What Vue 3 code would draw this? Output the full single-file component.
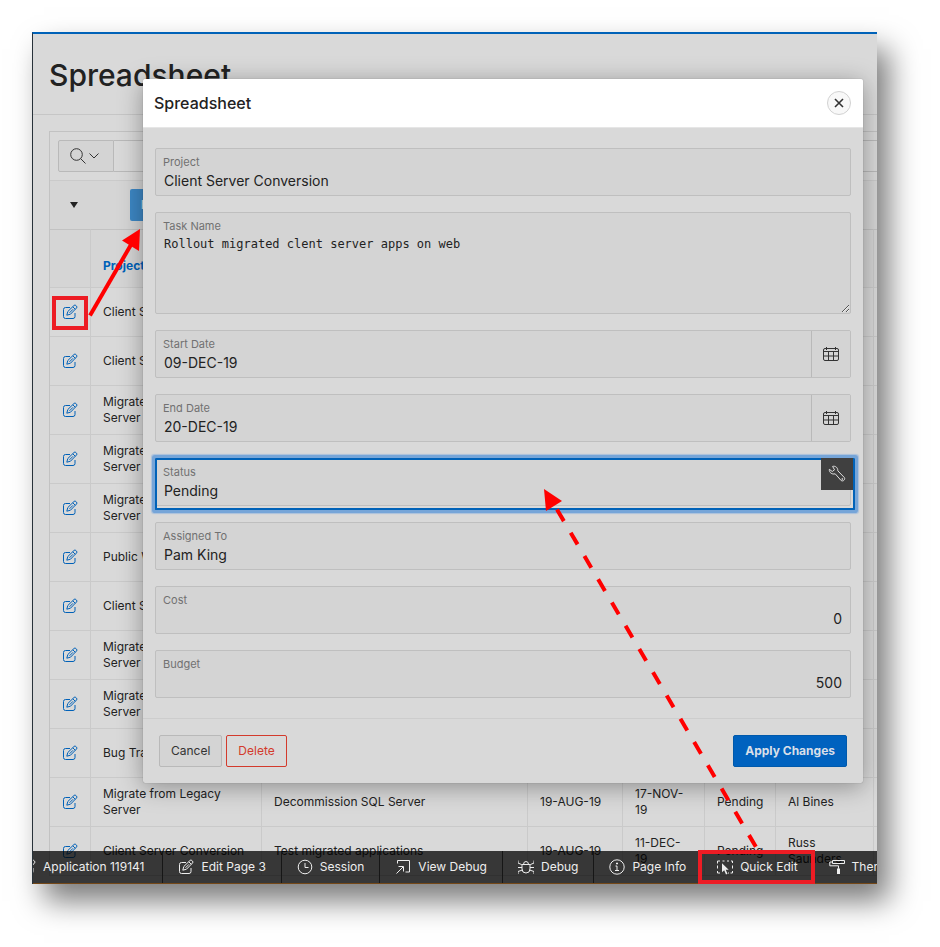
<script setup>
import { ref } from 'vue'

const migrate = 'Migrate from Legacy Server'
const client = 'Client Server Conversion'

const rows = [
  { project: client },
  { project: client },
  { project: migrate },
  { project: migrate },
  { project: migrate },
  { project: 'Public Website' },
  { project: client },
  { project: migrate },
  { project: migrate },
  { project: 'Bug Tracker' },
  { project: migrate, task: 'Decommission SQL Server', start: '19-AUG-19', end: '17-NOV-19', status: 'Pending', owner: 'Al Bines' },
  { project: client, task: 'Test migrated applications', start: '19-AUG-19', end: '11-DEC-19', status: 'Pending', owner: 'Russ Saunders' }
]

const fields = ref([
  { id: 'project', label: 'Project', value: 'Client Server Conversion' },
  { id: 'task', label: 'Task Name', value: 'Rollout migrated clent server apps on web', kind: 'area' },
  { id: 'start', label: 'Start Date', value: '09-DEC-19', kind: 'date' },
  { id: 'end', label: 'End Date', value: '20-DEC-19', kind: 'date' },
  { id: 'status', label: 'Status', value: 'Pending', kind: 'picked' },
  { id: 'assigned', label: 'Assigned To', value: 'Pam King' },
  { id: 'cost', label: 'Cost', value: '0', kind: 'number' },
  { id: 'budget', label: 'Budget', value: '500', kind: 'number' }
])

const editPaths = [
  'M8 3.500H3.500a2 2 0 0 0-2 2v7a2 2 0 0 0 2 2h7.500a2 2 0 0 0 2-2V9',
  'M4.800 11.200l1-3.700L12 1.500a1.300 1.300 0 0 1 1.900 0l.6.6a1.300 1.300 0 0 1 0 1.900L8.500 10.200z',
  'M10.800 2.800l2.500 2.500M7.500 8.800l3.500-3.500'
]

const tools = [
  { label: 'Application 119141', paths: editPaths },
  { label: 'Edit Page 3', paths: editPaths },
  { label: 'Session', paths: ['M8 1.2a6.8 6.8 0 1 0 0 13.6a6.8 6.8 0 0 0 0-13.6z', 'M8 4v4.5h3.5'] },
  { label: 'View Debug', paths: ['M2.5 4.5v-3h12v11.500h-4', 'M1.500 14.500L8 8M3.500 7.500H8.500V12.500'] },
  { label: 'Debug', paths: ['M4 5.500h8v4.500a4 4 0 0 1-8 0z', 'M5.500 5.500a2.500 3 0 0 1 5 0', 'M0 1.500v2.500l3.500 1.500h1M16 1.500v2.500l-3.500 1.500h-1M0 8.500h4M16 8.500h-4M0 15v-2.500l4.500-1.500M16 15v-2.500l-4.500-1.500'] },
  { label: 'Page Info', paths: ['M8 .8a7.200 7.200 0 1 0 0 14.400a7.200 7.200 0 0 0 0-14.400z', 'M6.500 7H8v4.500M6 11.500h4M7.500 4h1v1h-1z'] },
  { label: 'Quick Edit', paths: ['M.5 4.500v-2.500h2.500M5.500 2h2M10 2h2M14 2h1.500v2M15.500 6.500v3M15.500 12v2h-2M.5 6.500v3M.5 12v2h2.500M12 14h-1'], solid: 'M5 4.200v9l2.200-2 1.800 4.300 1.500-.7-1.800-4.100h3z' },
  { label: 'Theme Roller', paths: ['M3.500 1.500h12v3h-12z', 'M3.500 3H.8v3.800h8.700v3'], solid: 'M8 9.500h3v5.500h-3z' }
]
</script>

<template>
  <main class="stage">
    <div class="frame">
      <header class="page-head"><h1>Spreadsheet</h1></header>

      <section class="region">
        <div class="search">
          <button class="search-btn" type="button" aria-label="Search columns">
            <svg width="30" height="16" viewBox="0 0 30 16">
              <circle cx="6.500" cy="6.500" r="5.800" />
              <path d="M10.700 10.700L15.500 15.500M19.500 5.500l4.500 4.500 4.500-4.500" />
            </svg>
          </button>
          <input class="search-box" type="text" aria-label="Search">
        </div>
        <div class="actions">
          <button class="caret" type="button" aria-label="Row actions"></button>
          <button class="edit-btn" type="button">Edit</button>
        </div>
        <table class="grid">
          <colgroup>
            <col class="c-edit"><col class="c-project"><col class="c-task"><col class="c-start">
            <col class="c-end"><col class="c-status"><col class="c-owner"><col class="c-rest">
          </colgroup>
          <thead>
            <tr><th></th><th>Project</th><th></th><th></th><th></th><th></th><th></th><th></th></tr>
          </thead>
          <tbody>
            <tr v-for="(r, i) in rows" :key="i">
              <td class="edit-cell">
                <a href="#" aria-label="Edit row">
                  <svg class="icon" viewBox="0 0 16 16"><path v-for="p in editPaths" :key="p" :d="p" /></svg>
                </a>
              </td>
              <td>{{ r.project }}</td>
              <td>{{ r.task }}</td>
              <td>{{ r.start }}</td>
              <td>{{ r.end }}</td>
              <td>{{ r.status }}</td>
              <td>{{ r.owner }}</td>
              <td></td>
            </tr>
          </tbody>
        </table>
      </section>

      <section class="dialog" role="dialog" aria-labelledby="dialog-title">
        <header class="dialog-head">
          <h2 id="dialog-title">Spreadsheet</h2>
          <button class="close" type="button" aria-label="Close">
            <svg width="10" height="10" viewBox="0 0 10 10"><path d="M1 1l8 8M9 1l-8 8" /></svg>
          </button>
        </header>
        <form class="dialog-body" @submit.prevent>
          <div v-for="f in fields" :key="f.id" class="field" :class="f.kind">
            <div class="control">
              <label :for="f.id">{{ f.label }}</label>
              <textarea v-if="f.kind === 'area'" :id="f.id" v-model="f.value" spellcheck="false"></textarea>
              <input v-else :id="f.id" v-model="f.value" type="text">
            </div>
            <button v-if="f.kind === 'date'" class="calendar" type="button" :aria-label="'Pick ' + f.label">
              <svg width="16" height="14" viewBox="0 0 16 14">
                <rect x=".5" y="1.500" width="15" height="12" rx="1.500" />
                <path d="M.5 4.500h15M.5 9h15M5.500 4.500v9M10.500 4.500v9M3.500 0v3M12.500 0v3" />
              </svg>
            </button>
            <div v-if="f.kind === 'picked'" class="selection">
              <button class="wrench" type="button" aria-label="Edit component">
                <svg width="18" height="18" viewBox="0 0 18 18">
                  <path d="M1.300 4.300L4.300 6.500 6.500 4.800 4.600 1.400C7.500.6 10 2.800 9.800 5.800L16.300 12.500C17.600 14 15.500 16.900 13.200 15.600L7.200 8.800C4 9.800 1 7.500 1.300 4.300z" />
                  <circle cx="14.300" cy="14" r=".5" />
                </svg>
              </button>
            </div>
          </div>
        </form>
        <footer class="dialog-foot">
          <button class="btn" type="button">Cancel</button>
          <button class="btn danger" type="button">Delete</button>
          <button class="btn hot" type="button">Apply Changes</button>
        </footer>
      </section>

      <nav class="devbar" aria-label="Developer toolbar">
        <a v-for="t in tools" :key="t.label" href="#">
          <svg class="icon" viewBox="0 0 16 16">
            <path v-for="p in t.paths" :key="p" :d="p" />
            <path v-if="t.solid" class="solid" :d="t.solid" />
          </svg>
          <span>{{ t.label }}</span>
        </a>
      </nav>
    </div>

    <svg class="marks" width="940" height="947" viewBox="0 0 940 947" aria-hidden="true">
      <rect x="54" y="298" width="32" height="30" />
      <rect x="700" y="852" width="113" height="30" />
      <path class="line" d="M90 315.500L132 243" />
      <path class="head" d="M140 229L139 251 122 240.500z" />
      <path class="line dashed" d="M557 509.500L756 847" />
      <path class="head" d="M544 489L562 501 546 511z" />
    </svg>
  </main>
</template>

<style>
body {
  margin: 0;
  background: #fff;
}
</style>

<style scoped>
.stage {
  position: relative;
  box-sizing: border-box;
  min-height: 100vh;
  padding: 32px 63px 63px 32px;
  overflow: hidden;
  font-family: Inter, "Liberation Sans", sans-serif;
  font-size: 12px;
  line-height: 16px;
  color: #222;
}
.stage *,
.stage *::before {
  box-sizing: border-box;
}
button,
input,
textarea {
  margin: 0;
  font: inherit;
  color: inherit;
}
svg {
  display: block;
  fill: none;
  stroke: currentColor;
}
.frame {
  position: relative;
  overflow: hidden;
  background: #d9d9d9;
  border-top: 2px solid #0062b8;
  border-left: 1px solid #28323a;
  box-shadow: 12px 17px 28px rgba(0, 0, 0, 0.52);
}
.page-head {
  height: 81px;
  padding: 21px 16px 0;
  border-bottom: 1px solid #c6c6c6;
}
h1 {
  margin: 0;
  font-size: 30px;
  line-height: 40px;
  font-weight: 500;
  color: #222;
}
.region {
  margin: 16px -24px 8px 16px;
  border: 1px solid #c2c2c2;
}
.search {
  display: flex;
  height: 49px;
  padding: 8px;
  border-bottom: 1px solid #cacaca;
}
.search-btn {
  width: 56px;
  height: 32px;
  padding: 0 0 0 11px;
  border: 1px solid #b9b9b9;
  border-radius: 2px 0 0 2px;
  background: #d4d4d4;
  color: #333;
}
.search-box {
  flex: 1;
  height: 32px;
  border: 1px solid #b9b9b9;
  border-left: 0;
  background: #d9d9d9;
}
.actions {
  display: flex;
  align-items: center;
  gap: 48px;
  height: 48px;
  padding-left: 16px;
  background: #d5d5d5;
}
.caret {
  display: grid;
  place-items: center;
  width: 16px;
  height: 32px;
  padding: 0;
  border: 0;
  background: none;
}
.caret::before {
  content: "";
  border: 4px solid transparent;
  border-top: 6px solid #222;
  border-bottom: 0;
}
.edit-btn {
  height: 32px;
  padding: 0 11px;
  border: 0;
  border-radius: 2px;
  background: #3d87c4;
  font-weight: 700;
  color: #d9e2ea;
}
.grid {
  width: 100%;
  table-layout: fixed;
  border-collapse: separate;
  border-spacing: 0;
}
.c-edit { width: 41px; }
.c-project { width: 171px; }
.c-task { width: 266px; }
.c-start { width: 95px; }
.c-end { width: 82px; }
.c-status { width: 71px; }
.c-owner { width: 98px; }
th,
td {
  padding: 0 12px;
  border: solid #cacaca;
  border-width: 1px 1px 0 0;
  text-align: left;
}
th {
  height: 58px;
  padding-top: 15px;
  border-top-color: #c2c2c2;
  background: #d5d5d5;
  font-weight: 700;
  color: #0061b8;
}
td {
  height: 49px;
}
.edit-cell a {
  color: #0061b8;
}
.icon {
  flex: none;
  width: 16px;
  height: 16px;
}
.solid {
  fill: currentColor;
  stroke: none;
}
.dialog {
  position: absolute;
  top: 45px;
  left: 110px;
  right: 14px;
  border-radius: 2px;
  background: #d9d9d9;
  box-shadow: 0 0 1px rgba(0, 0, 0, 0.4), 0 4px 24px rgba(0, 0, 0, 0.35);
}
.dialog-head {
  display: flex;
  align-items: center;
  justify-content: space-between;
  height: 49px;
  padding: 0 12px 0 11px;
  border-bottom: 1px solid #e6e6e6;
  border-radius: 2px 2px 0 0;
  background: #fff;
}
h2 {
  margin: 0;
  font-size: 16px;
  line-height: 24px;
  font-weight: 500;
}
.close {
  display: grid;
  place-items: center;
  width: 24px;
  height: 24px;
  padding: 0;
  border: 1px solid #d2d2d2;
  border-radius: 50%;
  background: #f8f8f8;
}
.close svg {
  stroke-width: 1.6;
  color: #333;
}
.dialog-body {
  display: flex;
  flex-direction: column;
  gap: 16px;
  padding: 20px 12px;
}
.field {
  position: relative;
  display: flex;
  height: 48px;
  border: 1px solid #bfbfbf;
  border-radius: 2px;
  background: #d4d4d4;
}
.field.area {
  height: 102px;
}
.control {
  flex: 1;
  display: flex;
  flex-direction: column;
}
label {
  height: 20px;
  padding: 5px 7px 0;
  font-size: 11px;
  line-height: 16px;
  color: #717171;
}
.search-box,
.control input {
  outline: 0;
}
.control input,
textarea {
  display: block;
  width: 100%;
  padding: 0 8px;
  border: 0;
  outline: 0;
  background: none;
}
.control input {
  height: 22px;
  font-size: 14px;
}
.number input {
  text-align: right;
}
textarea {
  flex: 1;
  padding-top: 3px;
  font-family: "DejaVu Sans Mono", monospace;
  font-size: 12px;
  line-height: 16px;
}
.calendar {
  display: grid;
  place-items: center;
  width: 39px;
  padding: 0;
  border: 0;
  border-left: 1px solid #b9b9b9;
  background: #d4d4d4;
  color: #333;
}
.selection {
  position: absolute;
  inset: -1px -5px -5px -1px;
  display: flex;
  justify-content: flex-end;
  border: 2px solid #0062b8;
  border-top-width: 0;
  border-radius: 1px;
  box-shadow: inset 0 2px #0062b8, 0 0 0 3px #76a5d8, 0 0 1px 4px #a9c0dc;
}
.wrench {
  display: grid;
  place-items: center;
  width: 32px;
  height: 32px;
  padding: 0;
  border: 0;
  background: #404040;
  color: #e0e0e0;
}
.dialog-foot {
  display: flex;
  gap: 4px;
  padding: 16px;
  border-top: 1px solid #cdcdcd;
}
.btn {
  height: 32px;
  padding: 0 11px;
  border: 1px solid #b9b9b9;
  border-radius: 2px;
  background: #d4d4d4;
  color: #333;
}
.danger {
  border-color: #d33a2c;
  background: #d9d9d9;
  color: #d33a2c;
}
.hot {
  margin-left: auto;
  border-color: #0059ab;
  background: #0062bf;
  font-weight: 700;
  color: #d9dfe8;
}
.devbar {
  position: absolute;
  right: 0;
  bottom: 0;
  left: 0;
  display: flex;
  height: 33px;
  border-bottom: 1px solid #744818;
  background: rgba(0, 0, 0, 0.75);
}
.devbar a {
  flex: none;
  display: flex;
  align-items: center;
  gap: 7px;
  padding: 0 15px;
  border-right: 1px solid #161616;
  color: #eee;
  text-decoration: none;
  white-space: nowrap;
}
.devbar a:first-child {
  margin-left: -28px;
  padding-right: 18px;
}
.marks {
  position: absolute;
  top: 0;
  left: 0;
  pointer-events: none;
}
.marks rect {
  stroke: #ed1c24;
  stroke-width: 4;
}
.line {
  stroke: #f00;
  stroke-width: 4;
}
.dashed {
  stroke-dasharray: 13.5 13.5;
}
.head {
  fill: #f00;
  stroke: none;
}
</style>
